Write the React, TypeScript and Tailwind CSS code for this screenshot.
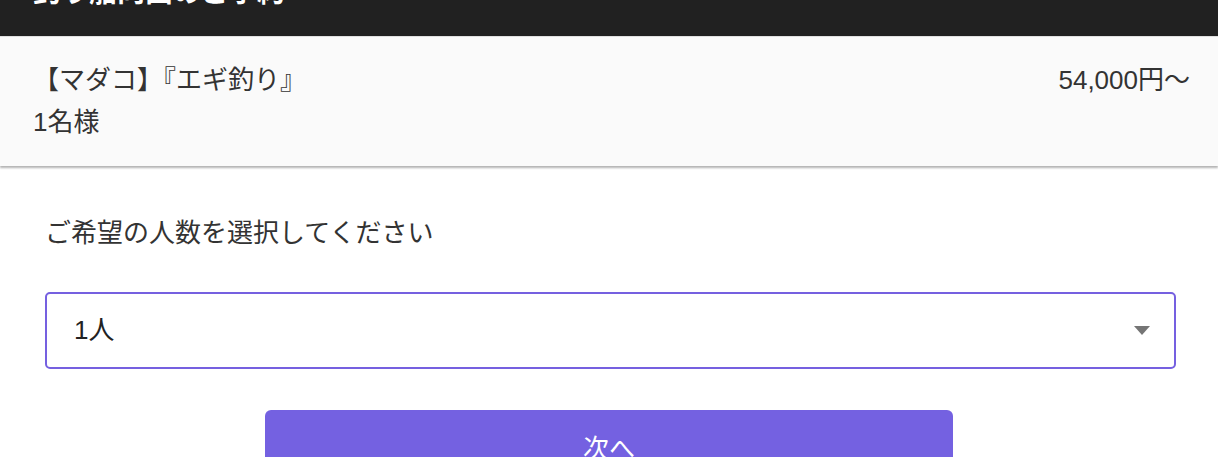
import React from "react";

const font = "font-['Liberation_Sans','Noto_Sans_CJK_JP',sans-serif]";

export default function App() {
  return (
    <div className={`h-[457px] w-[1218px] overflow-hidden bg-white ${font}`}>
      <header className="h-[37px] overflow-hidden border-b border-[#e0e0e0] bg-[#212121] px-[33px]">
        <h1 className="-mt-[21px] text-[28px] font-bold leading-none text-white">
          釣り船向西のご予約
        </h1>
      </header>

      <section className="bg-[#fafafa] px-[33px] pb-[23px] pt-[22px] text-[26px] leading-[42px] text-[#333] shadow-[0_2px_2px_rgba(0,0,0,0.3)]">
        <div className="flex items-center justify-between">
          <span>【マダコ】『エギ釣り』</span>
          <span className="mr-[-5px]">54,000円〜</span>
        </div>
        <div>1名様</div>
      </section>

      <main className="px-[45px] pt-[46px]">
        <p className="text-[26px] leading-[42px] text-[#333]">
          ご希望の人数を選択してください
        </p>

        <div className="mt-[38px] flex h-[77px] w-[1131px] items-center justify-between rounded-[5px] border-2 border-[#7560e0] pl-[27px] pr-[24px]">
          <span className="text-[26px] text-[#222]">1人</span>
          <svg width="16" height="9" viewBox="0 0 16 9">
            <path d="M0 0 L16 0 L8 9 Z" fill="#757575" />
          </svg>
        </div>

        <div className="mt-[41px] flex justify-center">
          <button className="flex h-[76px] w-[688px] items-center justify-center rounded-[6px] bg-[#7461e1] pt-[2px] text-[26px] text-white">
            次へ
          </button>
        </div>
      </main>
    </div>
  );
}
